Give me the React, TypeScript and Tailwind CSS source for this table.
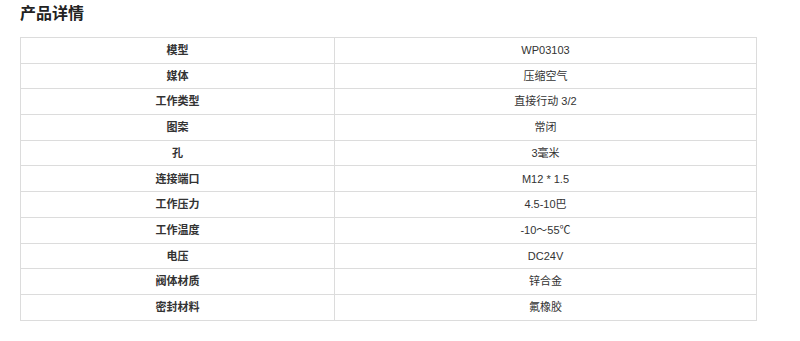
import React from "react";

const rows: [string, string][] = [
  ["模型", "WP03103"],
  ["媒体", "压缩空气"],
  ["工作类型", "直接行动 3/2"],
  ["图案", "常闭"],
  ["孔", "3毫米"],
  ["连接端口", "M12 * 1.5"],
  ["工作压力", "4.5-10巴"],
  ["工作温度", "-10～55℃"],
  ["电压", "DC24V"],
  ["阀体材质", "锌合金"],
  ["密封材料", "氟橡胶"],
];

export default function App() {
  return (
    <div
      className="w-[800px] h-[341px] bg-white text-[#333]"
      style={{ fontFamily: '"Liberation Sans", "Noto Sans CJK SC", sans-serif' }}
    >
      <h2 className="pl-[20px] pt-[4px] text-[16px] leading-[20px] font-bold text-[#222]">产品详情</h2>
      <div className="pl-[20px] pt-[13px]">
        <table className="w-[737px] border-collapse border border-[#dcdcdc] text-[11px]">
          <tbody>
            {rows.map(([k, v]) => (
              <tr key={k} className="h-[25.7px]">
                <td className="w-[314px] border border-[#dcdcdc] text-center font-bold p-0">{k}</td>
                <td className="border border-[#dcdcdc] text-center p-0">{v}</td>
              </tr>
            ))}
          </tbody>
        </table>
      </div>
    </div>
  );
}
